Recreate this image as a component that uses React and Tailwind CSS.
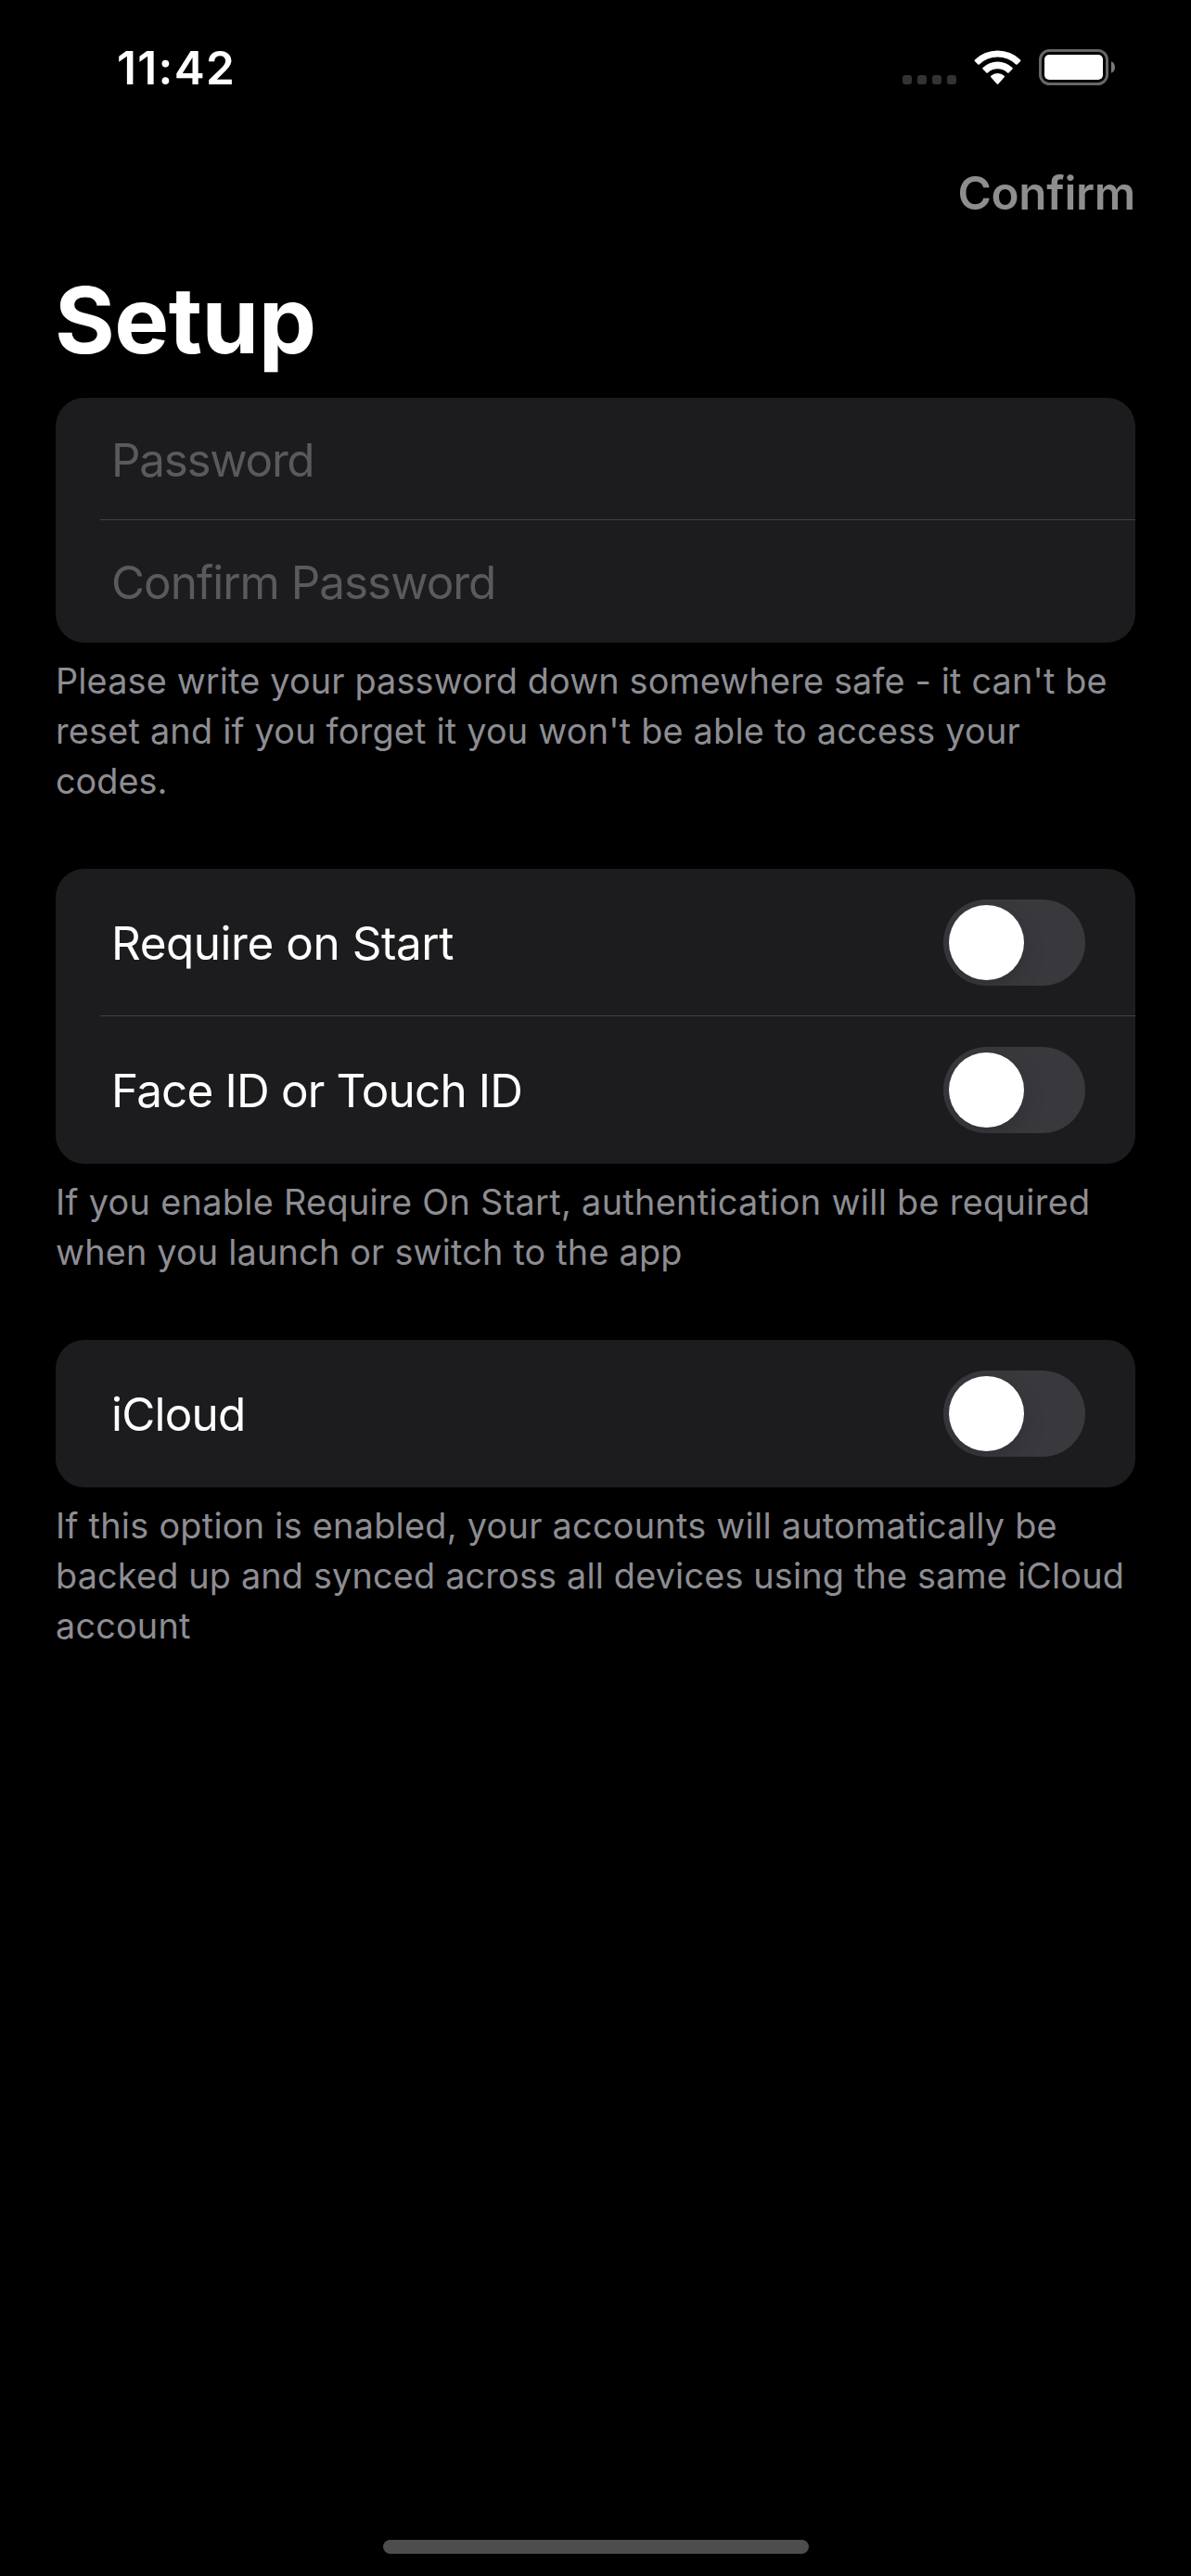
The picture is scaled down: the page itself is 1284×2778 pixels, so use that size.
import React from "react";

function StatusIcons() {
  return (
    <svg className="h-[40px] w-[230px]" viewBox="973 53 230 40" fill="none">
      {[973, 989, 1005, 1021].map((x) => (
        <rect key={x} x={x} y="81" width="10" height="10" rx="3" fill="#333333" />
      ))}
      <g fill="#ffffff">
        <path d="M1050.9 64.4 A35.3 35.3 0 0 1 1100.1 64.4 Q1100.9 65.1 1100.2 65.9 L1096.6 69.4 Q1095.9 70 1095.2 69.4 A28.4 28.4 0 0 0 1055.8 69.4 Q1055.1 70 1054.4 69.4 L1050.8 65.9 Q1050.1 65.1 1050.9 64.4Z" />
        <path d="M1059.5 73 A23.2 23.2 0 0 1 1091.5 73 Q1092.2 73.8 1091.5 74.5 L1087.5 78.4 Q1086.8 79 1086.1 78.4 A15.6 15.6 0 0 0 1064.9 78.4 Q1064.2 79 1063.5 78.4 L1059.5 74.5 Q1058.8 73.8 1059.5 73Z" />
        <path d="M1068.3 81.7 A11 11 0 0 1 1082.7 81.7 Q1083.5 82.5 1082.7 83.3 L1076.3 90.4 Q1075.5 91.2 1074.7 90.4 L1068.3 83.3 Q1067.5 82.5 1068.3 81.7Z" />
      </g>
      <rect x="1121.5" y="54.5" width="72" height="36" rx="10" stroke="#666666" strokeWidth="3" />
      <rect x="1126" y="59" width="63" height="27" rx="5" fill="#ffffff" />
      <path d="M1198 66.3 C1200.600 67.3 1202 69.7 1202 72.500 C1202 75.300 1200.600 77.700 1198 78.700Z" fill="#7a7a7a" />
    </svg>
  );
}

function Switch({ label }) {
  return (
    <button
      role="switch"
      aria-checked="false"
      aria-label={label}
      className="flex h-[93px] w-[153px] items-center overflow-hidden rounded-full bg-[#39383d] p-[6px]"
    >
      <span className="size-[81px] rounded-full bg-white shadow-[0_9px_24px_rgba(0,0,0,0.15)]" />
    </button>
  );
}

function Card({ children }) {
  return <div className="overflow-hidden rounded-[31px] bg-[#1c1c1e]">{children}</div>;
}

function Separator() {
  return <div className="-mt-px ml-12 h-px bg-[#414144]" />;
}

function FieldRow({ placeholder, className }) {
  return (
    <div className="flex h-[132px] items-center px-[60px] pt-[2px] text-[49.4px] text-[#5a5a5e]">
      <span className={className}>{placeholder}</span>
    </div>
  );
}

function ToggleRow({ label, className }) {
  return (
    <div className="flex h-[159px] items-center justify-between pr-[54px] pl-[60px] text-[49.4px] text-white">
      <span className={"pt-px " + className}>{label}</span>
      <Switch label={label} />
    </div>
  );
}

function Footer({ lines }) {
  return (
    <p className="mt-[14px] mb-[68px] text-[37.8px] leading-[54px] whitespace-nowrap text-[#8d8d93]">
      {lines.map(([text, spacing]) => (
        <span key={text} className={"block " + spacing}>
          {text}
        </span>
      ))}
    </p>
  );
}

export default function App() {
  return (
    <div className="flex h-[2778px] w-[1284px] flex-col bg-black font-['Inter','Liberation_Sans',sans-serif]">
      <header className="flex justify-between pt-[43px] pr-[81px] pl-[126px]">
        <span className="text-[49.5px] leading-[60px] font-semibold tracking-[1.35px] text-white">11:42</span>
        <div className="pt-[10px]">
          <StatusIcons />
        </div>
      </header>
      <nav className="mt-[75px] flex justify-end pr-[60px]">
        <button className="text-[49.4px] leading-[60px] font-semibold tracking-[-0.31px] text-[#8e8e8e]">Confirm</button>
      </nav>
      <main className="flex-1 px-[60px] pt-[47px]">
        <h1 className="-ml-px mb-6 text-[99px] leading-[120px] font-bold tracking-[-0.5px] text-white">Setup</h1>

        <Card>
          <FieldRow placeholder="Password" className="tracking-[-1.28px]" />
          <Separator />
          <FieldRow placeholder="Confirm Password" className="tracking-[-0.99px]" />
        </Card>
        <Footer
          lines={[
            ["Please write your password down somewhere safe - it can't be", "tracking-[0.162px]"],
            ["reset and if you forget it you won't be able to access your", "tracking-[0.218px]"],
            ["codes.", "tracking-[0px]"],
          ]}
        />

        <Card>
          <ToggleRow label="Require on Start" className="tracking-[-0.43px]" />
          <Separator />
          <ToggleRow label="Face ID or Touch ID" className="tracking-[-0.81px]" />
        </Card>
        <Footer
          lines={[
            ["If you enable Require On Start, authentication will be required", "tracking-[0.322px]"],
            ["when you launch or switch to the app", "tracking-[0.2px]"],
          ]}
        />

        <Card>
          <ToggleRow label="iCloud" className="tracking-[-0.75px]" />
        </Card>
        <Footer
          lines={[
            ["If this option is enabled, your accounts will automatically be", "tracking-[0.272px]"],
            ["backed up and synced across all devices using the same iCloud", "tracking-[0.177px]"],
            ["account", "tracking-[0.2px]"],
          ]}
        />
      </main>
      <div className="mb-6 ml-[413px] h-[15px] w-[459px] rounded-full bg-[#4d4d4d]" />
    </div>
  );
}
